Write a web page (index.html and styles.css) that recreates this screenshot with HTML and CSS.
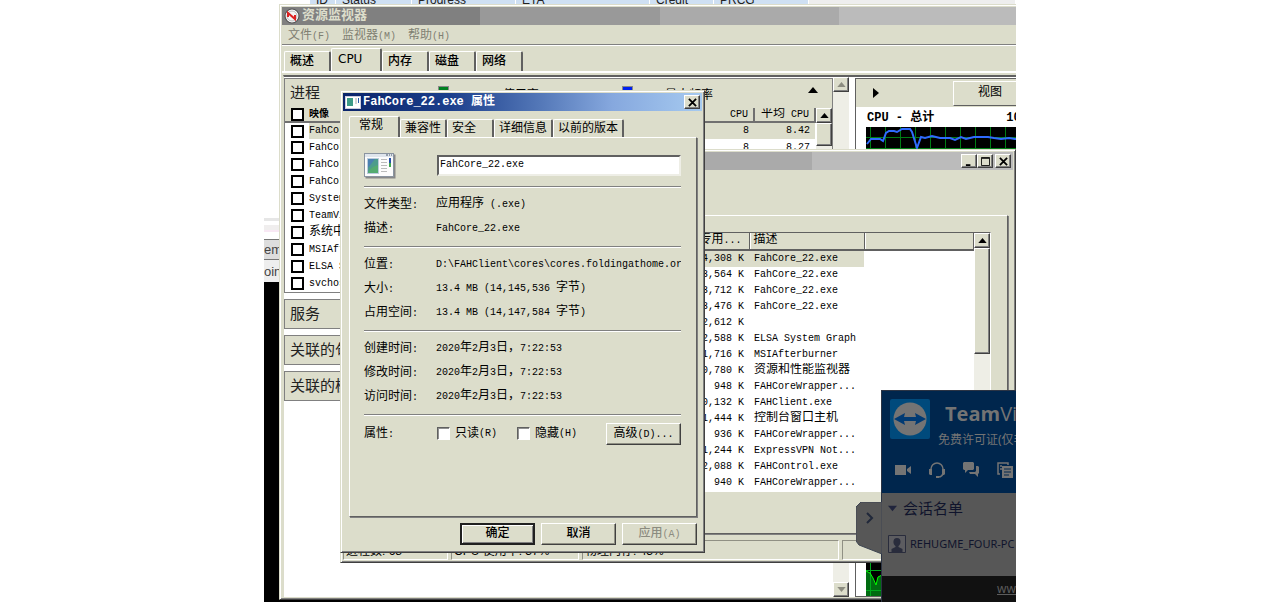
FILE: index.html
```html
<!DOCTYPE html>
<html lang="zh-CN">
<head>
<meta charset="utf-8">
<title>资源监视器</title>
<link rel="stylesheet" href="styles.css">
</head>
<body>
<main class="desktop">

  <section class="browser">
    <div class="queue-head"><span class="q-id">ID</span><span class="q-status">Status</span><span class="q-progress">Progress</span><span class="q-eta">ETA</span><span class="q-credit">Credit</span><span class="q-prcg">PRCG</span><span class="q-rest"></span></div>
    <div class="browser-blank"></div>
    <div class="browser-band"></div>
    <div class="browser-row">em</div>
    <div class="browser-row browser-row-light">oin</div>
    <div class="browser-dark"></div>
  </section>

  <section class="window monitor">
    <header class="titlebar titlebar-idle">
      <svg class="app-icon" viewBox="0 0 16 16"><circle cx="8" cy="8" r="7" fill="#fff" stroke="#555" stroke-width="1.2"/><circle cx="8" cy="8" r="5" fill="#f4f4f4" stroke="#bbb"/><path d="M4 9V5l7 6V7" fill="none" stroke="#d22" stroke-width="2"/></svg>
      <h1 class="title">资源监视器</h1>
    </header>
    <nav class="menu"><span>文件<i>(F)</i></span><span>监视器<i>(M)</i></span><span>帮助<i>(H)</i></span></nav>
    <nav class="tabs monitor-tabs">
      <button class="tab">概述</button><button class="tab tab-on">CPU</button><button class="tab">内存</button><button class="tab">磁盘</button><button class="tab">网络</button>
    </nav>
    <div class="monitor-body">
      <div class="panels">
        <section class="panel">
          <header class="panel-head">
            <h2>进程</h2>
            <span class="legend legend-cpu"><b class="chip chip-green"></b>CPU 使用率</span>
            <span class="legend"><b class="chip chip-blue"></b>最大频率</span>
            <svg class="arrow" viewBox="0 0 10 6"><path d="M0 6L5 0l5 6z"/></svg>
          </header>
          <div class="process-list">
            <table class="processes">
              <thead><tr><th class="c-check"><input type="checkbox" aria-label="全选"></th><th><b>映像</b></th><th class="c-cpu">CPU</th><th class="c-avg"><em>平均</em> CPU</th></tr></thead>
              <tbody>
                <tr class="picked"><td class="c-check"><input type="checkbox" aria-label="FahCore 1"></td><td>FahCore_22.exe</td><td>8</td><td>8.42</td></tr>
                <tr><td class="c-check"><input type="checkbox" aria-label="FahCore 2"></td><td>FahCore_22.exe</td><td>8</td><td>8.27</td></tr>
                <tr><td class="c-check"><input type="checkbox" aria-label="FahCore 3"></td><td>FahCore_22.exe</td><td></td><td></td></tr>
                <tr><td class="c-check"><input type="checkbox" aria-label="FahCore 4"></td><td>FahCore_22.exe</td><td></td><td></td></tr>
                <tr><td class="c-check"><input type="checkbox" aria-label="System"></td><td>System</td><td></td><td></td></tr>
                <tr><td class="c-check"><input type="checkbox" aria-label="TeamViewer"></td><td>TeamViewer.exe</td><td></td><td></td></tr>
                <tr><td class="c-check"><input type="checkbox" aria-label="系统中断"></td><td><em>系统中断</em></td><td></td><td></td></tr>
                <tr><td class="c-check"><input type="checkbox" aria-label="MSIAfterburner"></td><td>MSIAfterburner</td><td></td><td></td></tr>
                <tr><td class="c-check"><input type="checkbox" aria-label="ELSA"></td><td>ELSA System</td><td></td><td></td></tr>
                <tr><td class="c-check"><input type="checkbox" aria-label="svchost"></td><td>svchost.exe</td><td></td><td></td></tr>
              </tbody>
            </table>
            <div class="scroll"><button class="scroll-btn" aria-label="向上"><svg viewBox="0 0 10 6"><path d="M0 6L5 0l5 6z"/></svg></button><div class="thumb thumb-short"></div></div>
          </div>
        </section>
        <section class="panel panel-shut"><h2>服务</h2></section>
        <section class="panel panel-shut"><h2>关联的句柄</h2></section>
        <section class="panel panel-shut"><h2>关联的模块</h2></section>
      </div>
      <div class="scroll scroll-main"><button class="scroll-btn off" aria-label="向上"><svg viewBox="0 0 10 6"><path d="M0 6L5 0l5 6z"/></svg></button><div class="track"></div><button class="scroll-btn off" aria-label="向下"><svg viewBox="0 0 10 6"><path d="M0 0h10L5 6z"/></svg></button></div>
      <aside class="charts">
        <header class="charts-head"><svg class="arrow-right" viewBox="0 0 6 10"><path d="M0 0l6 5-6 5z"/></svg><button class="view-btn">视图</button></header>
        <div class="chart-title"><span>CPU - <em>总计</em></span><span>100%</span></div>
        <svg class="chart" viewBox="0 0 160 90" preserveAspectRatio="none"><rect width="160" height="90" fill="#000"/><path d="M4.500 0V90M19.500 0V90M34.500 0V90M49.500 0V90M64.500 0V90M79.500 0V90M94.500 0V90M109.500 0V90M124.500 0V90M139.500 0V90M0 10.500H160M0 21.500H160" stroke="#007c14"/><path d="M1 17l4-5h9l3 2 3-8 3-2h5l3 1 5-3h8l2 3 5 16 4-11 4 1 7-2 8 2h10l5 2 6-3 5 2 8-2h14l6 1 7 1 8-1 6 1h10" fill="none" stroke="#2f6bff" stroke-width="2"/></svg>
        <svg class="chart chart-low" viewBox="0 0 160 34" preserveAspectRatio="none"><rect width="160" height="34" fill="#000"/><path d="M0 9l4 2 3 5 3 7 2-8 4-2h144v21H0z" fill="#006b10"/><path d="M4.500 0V34M0 8.500H160M0 28.500H160" stroke="#00a81c"/><path d="M0 9l4 2 3 5 3 7 2-8 4-2" fill="none" stroke="#0f0"/></svg>
      </aside>
    </div>
  </section>

  <section class="window taskman">
    <header class="titlebar titlebar-idle">
      <div class="controls">
        <button aria-label="最小化"><svg viewBox="0 0 10 10"><path d="M1 8h5v2H1z"/></svg></button><button aria-label="最大化"><svg viewBox="0 0 10 10"><path d="M.5 .5h9v9h-9zM1 1.500h8" fill="none" stroke="#000"/></svg></button><button class="gap-left" aria-label="关闭"><svg viewBox="0 0 10 10"><path d="M1 1l8 8M9 1L1 9" stroke="#000" stroke-width="2"/></svg></button>
      </div>
    </header>
    <div class="taskman-page">
      <div class="task-list">
        <table class="tasks">
          <thead><tr><th class="t-mem"><em>专用</em>...</th><th class="t-desc"><em>描述</em></th><th></th></tr></thead>
          <tbody>
            <tr class="picked"><td>24,308 K</td><td>FahCore_22.exe</td><td></td></tr>
            <tr><td>23,564 K</td><td>FahCore_22.exe</td><td></td></tr>
            <tr><td>23,712 K</td><td>FahCore_22.exe</td><td></td></tr>
            <tr><td>23,476 K</td><td>FahCore_22.exe</td><td></td></tr>
            <tr><td>12,612 K</td><td></td><td></td></tr>
            <tr><td>12,588 K</td><td>ELSA System Graph</td><td></td></tr>
            <tr><td>11,716 K</td><td>MSIAfterburner</td><td></td></tr>
            <tr><td>10,780 K</td><td><em>资源和性能监视器</em></td><td></td></tr>
            <tr><td>948 K</td><td>FAHCoreWrapper...</td><td></td></tr>
            <tr><td>10,132 K</td><td>FAHClient.exe</td><td></td></tr>
            <tr><td>1,444 K</td><td><em>控制台窗口主机</em></td><td></td></tr>
            <tr><td>936 K</td><td>FAHCoreWrapper...</td><td></td></tr>
            <tr><td>11,244 K</td><td>ExpressVPN Not...</td><td></td></tr>
            <tr><td>12,088 K</td><td>FAHControl.exe</td><td></td></tr>
            <tr><td>940 K</td><td>FAHCoreWrapper...</td><td></td></tr>
          </tbody>
        </table>
        <div class="scroll"><button class="scroll-btn" aria-label="向上"><svg viewBox="0 0 10 6"><path d="M0 6L5 0l5 6z"/></svg></button><div class="thumb thumb-long"></div></div>
      </div>
    </div>
    <footer class="status"><span class="s-count">进程数: 68</span><span class="s-cpu">CPU 使用率: 37%</span><span class="s-mem">物理内存: 43%</span><span class="s-rest"></span></footer>
  </section>

  <section class="window props">
    <header class="titlebar titlebar-live">
      <svg class="exe-icon" viewBox="0 0 16 14"><rect x=".5" y="1.5" width="15" height="12" fill="#fff" stroke="#ccd"/><path d="M2 3h6v8H2z" fill="#3d9a86"/><path d="M10 4h2M10 6h2M10 8h2" stroke="#aaa"/><path d="M13 3h1v5h-1z" fill="#2458a8"/></svg>
      <h1 class="title">FahCore_22.exe <em>属性</em></h1>
      <div class="controls"><button aria-label="关闭"><svg viewBox="0 0 10 10"><path d="M1 1l8 8M9 1L1 9" stroke="#000" stroke-width="2"/></svg></button></div>
    </header>
    <nav class="tabs props-tabs">
      <button class="tab tab-on">常规</button><button class="tab">兼容性</button><button class="tab tab-wide">安全</button><button class="tab">详细信息</button><button class="tab">以前的版本</button>
    </nav>
    <div class="sheet">
      <div class="file-head">
        <svg class="file-icon" viewBox="0 0 32 26"><rect x="1.5" y="1.5" width="30" height="24" fill="#888"/><rect x=".5" y=".5" width="29" height="23" fill="#fcfcfc" stroke="#8a94a0"/><path d="M1 1h28v3H1z" fill="#dfe5ec"/><path d="M22 2h2M25 2h1M27 2h1" stroke="#456"/><path d="M3 5h12v16H3z" fill="#bcd"/><path d="M4 6h10v14H4z" fill="#4c9c8c"/><path d="M4 6h7L4 15z" fill="#4a80b0"/><path d="M4 20c2-5 6-7 10-8v8z" fill="#54ab70"/><path d="M17 6.500h6M17 9.500h6M17 12.500h6M17 15.500h6M17 18.500h6" stroke="#bbb"/><path d="M25 5h2v5h-2z" fill="#2450a8"/><path d="M25 10h2v4h-2z" fill="#3da64c"/></svg>
        <input class="file-name" type="text" aria-label="文件名" value="FahCore_22.exe">
      </div>
      <dl class="facts"><dt>文件类型<i>:</i></dt><dd><em>应用程序</em> (.exe)</dd><dt>描述<i>:</i></dt><dd>FahCore_22.exe</dd></dl>
      <dl class="facts"><dt>位置<i>:</i></dt><dd>D:\FAHClient\cores\cores.foldingathome.org</dd><dt>大小<i>:</i></dt><dd>13.4 MB (14,145,536 <em>字节</em>)</dd><dt>占用空间<i>:</i></dt><dd>13.4 MB (14,147,584 <em>字节</em>)</dd></dl>
      <dl class="facts"><dt>创建时间<i>:</i></dt><dd>2020<em>年</em>2<em>月</em>3<em>日，</em>7:22:53</dd><dt>修改时间<i>:</i></dt><dd>2020<em>年</em>2<em>月</em>3<em>日，</em>7:22:53</dd><dt>访问时间<i>:</i></dt><dd>2020<em>年</em>2<em>月</em>3<em>日，</em>7:22:53</dd></dl>
      <div class="attrs">
        <span class="attrs-label">属性<i>:</i></span>
        <label class="attr"><input type="checkbox">只读<i>(R)</i></label>
        <label class="attr"><input type="checkbox">隐藏<i>(H)</i></label>
        <button class="btn advanced">高级<i>(D)...</i></button>
      </div>
    </div>
    <footer class="actions"><button class="btn btn-default">确定</button><button class="btn">取消</button><button class="btn" disabled>应用<i>(A)</i></button></footer>
  </section>

  <section class="viewer">
    <button class="viewer-grip" aria-label="收起"><svg viewBox="0 0 26 52"><path d="M26 0H5L0 5v34l3 4 23 9z" fill="#575757" stroke="#3e4552"/><path d="M11 11l5 5-5 5" fill="none" stroke="#20283a" stroke-width="2"/></svg></button>
    <header class="viewer-head">
      <div class="brand">
        <svg class="brand-logo" viewBox="0 0 40 40"><rect width="40" height="40" rx="2" fill="#004a7c"/><circle cx="20" cy="20" r="16.500" fill="#747474"/><path d="M4 20l11-6-1 4h12l-1-4 11 6-11 6 1-4H14l1 4z" fill="#003a73"/></svg>
        <div class="brand-text"><div class="brand-name"><b>Team</b>Viewer</div><div class="brand-note">免费许可证(仅非商业用途)</div></div>
      </div>
      <div class="tools">
        <svg viewBox="0 0 18 18"><path d="M1 4h11v10H1zM13 8l4-3v8l-4-3z" fill="#747474"/></svg>
        <svg viewBox="0 0 18 18"><path d="M3 10V8a6 6 0 0 1 12 0v3c0 3-2 5-5 5" fill="none" stroke="#747474" stroke-width="1.500"/><path d="M1 8h3v6H2l-1-1zM14 8h3v5l-1 1h-2zM8 15h3v2H8z" fill="#747474"/></svg>
        <svg viewBox="0 0 18 18"><path d="M2 1h9l1 1v6l-1 1H6l-3 3V9H2L1 8V2zM14 5h2l1 1v6l-1 1v3l-3-3H8l-1-2h6l1-1z" fill="#747474"/></svg>
        <svg viewBox="0 0 18 18"><path d="M4 13H2V2h10v2M4 5h2M4 8h2" fill="none" stroke="#747474" stroke-width="1.500"/><path d="M6 5h11v12H6z" fill="#747474"/><path d="M8 8h7M8 11h7M8 14h5" stroke="#00264d"/></svg>
      </div>
    </header>
    <div class="viewer-body">
      <h2><svg viewBox="0 0 10 6"><path d="M0 0h10L5 6z"/></svg>会话名单</h2>
      <div class="peer"><svg viewBox="0 0 18 18"><path d="M.5.5h17v17H.5z" fill="#5c5c60" stroke="#292c3c"/><path d="M9 3c5 0 4 7 1.500 8v1l4 2v3h-11v-3l4-2v-1C5 10 4 3 9 3z" fill="#292c3c"/></svg>REHUGME_FOUR-PC</div>
    </div>
    <footer class="viewer-foot"><a href="#">www.teamviewer.com</a></footer>
  </section>

</main>
</body>
</html>
```
FILE: styles.css
```css
* { box-sizing: border-box; }
body { margin: 0; background: #fff; color: #000; font: 12px/16px "Liberation Mono", "Noto Sans CJK SC", monospace; }
h1, h2, dl, dd { margin: 0; font-weight: normal; }
i { font-style: normal; font-size: 10px; line-height: 0; }
em { font-style: normal; font-size: 12px; line-height: 0; }
button, input { font: inherit; color: inherit; border-radius: 0; margin: 0; padding: 0; }
svg { display: block; flex: none; }
table { border-collapse: collapse; table-layout: fixed; }
th, td { padding: 0; font-weight: normal; text-align: left; white-space: nowrap; overflow: hidden; }

.desktop { position: relative; height: 100vh; margin: 0 264px; overflow: hidden; }
.window { position: absolute; display: flex; flex-direction: column; background: #dcddcb; border: 1px solid; border-color: #dcddcb #404040 #404040 #dcddcb; box-shadow: inset 1px 1px #fff, inset -1px -1px #808080; padding: 2px; }

/* browser behind the windows */
.browser { height: 100%; display: flex; flex-direction: column; font-family: "Liberation Sans", sans-serif; color: #444; }
.queue-head { display: flex; align-items: flex-end; height: 4px; margin-left: 46px; overflow: hidden; background: #cfe0f3; color: #222; line-height: 8px; }
.queue-head span { flex: none; padding-left: 6px; border-right: 1px solid #fff; }
.q-id { width: 26px; }
.q-status { width: 76px; }
.q-progress { width: 104px; }
.q-eta { width: 134px; }
.q-credit { width: 64px; }
.q-prcg { width: 95px; }
.queue-head .q-rest { flex: 1; height: 4px; background: #eee; }
.browser-blank { height: 214px; }
.browser-band { height: 21px; border-top: 3px solid #e6e6e6; background: linear-gradient(#fff 4px, #f0eeee 4px 9px, #f8e8f4 9px 11px, #fff 11px); }
.browser-row { height: 20px; border-top: 1px solid #777; background: #ddd; font-size: 13px; line-height: 19px; }
.browser-row-light { height: 23px; background: #eee; line-height: 24px; }
.browser-dark { flex: 1; background: #000; }

/* title bars */
.titlebar { display: flex; align-items: center; height: 18px; flex: none; }
.titlebar-idle { background: linear-gradient(90deg, #808080 198px, #999 198px 378px, #aaa 378px 557px, #bbb 557px); }
.taskman .titlebar-idle { background: linear-gradient(90deg, #808080 25%, #999 25% 47%, #aaa 47% 70%, #bbb 70%); }
.titlebar-live { background: linear-gradient(90deg, #0a246a, #1c3f8c 30%, #5478b8 55%, #86a8de 75%, #a6caf0); color: #fff; }
.title { font-size: 13px; line-height: 20px; font-weight: bold; color: #dcddcb; }
.titlebar-live .title { font-size: 12px; line-height: 18px; color: #fff; }
.app-icon { width: 16px; height: 16px; margin: 0 2px; }
.exe-icon { width: 16px; height: 14px; margin: 0 2px; }
.controls { display: flex; margin-left: auto; padding-right: 2px; }
.controls button, .scroll-btn { display: flex; align-items: center; justify-content: center; width: 16px; height: 14px; background: #dcddcb; border: 1px solid; border-color: #fff #404040 #404040 #fff; box-shadow: inset -1px -1px #808080; }
.controls svg { width: 9px; height: 9px; }
.controls .gap-left { margin-left: 2px; }

/* tabs */
.tabs { display: flex; align-items: flex-end; }
.tab { height: 18px; padding: 0 5px; background: #dcddcb; border: solid; border-width: 1px 2px 0 1px; border-color: #fff #606060 #dcddcb #fff; border-radius: 2px 2px 0 0; line-height: 16px; white-space: nowrap; }
.tab-on { height: 21px; padding: 0 8px 3px 6px; }

/* scroll bars */
.scroll { display: flex; flex-direction: column; width: 16px; flex: none; background: #eeeee6; }
.scroll-btn { height: 15px; flex: none; }
.scroll-btn svg { width: 9px; height: 5px; }
.off svg { fill: #8c8c80; }
.thumb { background: #dcddcb; border: 1px solid; border-color: #fff #404040 #404040 #fff; box-shadow: inset -1px -1px #808080; }
.thumb-short { height: 23px; }
.thumb-long { height: 106px; }
.track { flex: 1; }

/* resource monitor */
.monitor { left: 15px; top: 4px; right: -23px; bottom: 2px; }
.menu { display: flex; gap: 12px; height: 20px; flex: none; padding: 0 6px; line-height: 22px; color: #808072; border-bottom: 1px solid #808080; box-shadow: 0 1px #fff; }
.monitor-tabs { height: 28px; flex: none; padding: 0 2px; border-bottom: 2px solid #fff; }
.monitor-tabs .tab { width: 47px; height: 20px; text-align: left; font-weight: 500; }
.monitor-tabs .tab-on { width: 51px; height: 23px; font-family: "DejaVu Sans", sans-serif; }
.monitor-body { flex: 1; min-height: 0; display: flex; margin: 2px 0 0 1px; background: #fff; border-top: 2px solid #606060; border-left: 1px solid #dcddcb; }
.panels { width: 549px; flex: none; display: flex; flex-direction: column; gap: 6px; padding-top: 1px; }
.panel { border: 1px solid #808080; font-size: 10px; }
.panel h2 { font: 15px/26px "Noto Sans CJK SC", sans-serif; color: #222; padding-left: 5px; }
.panel-shut { background: #dcddcb; height: 30px; }
.panel-head { display: flex; height: 29px; padding-right: 14px; background: #dcddcb; }
.panel-head h2 { width: 153px; }
.legend { display: flex; gap: 32px; width: 184px; padding-top: 7px; font-size: 12px; line-height: 20px; }
.legend-cpu { gap: 25px; }
.chip { width: 11px; height: 10px; border: 1px solid #888; }
.chip-green { background: #008020; }
.chip-blue { background: #0020f0; }
.arrow { width: 10px; height: 6px; margin: 8px 0 0 auto; }
.process-list { display: flex; height: 184px; overflow: hidden; }
.processes { flex: 1; width: 0; line-height: 16px; }
.processes th { height: 14px; line-height: 13px; background: #dcddcb; border-bottom: 2px solid #707070; }
.processes td { height: 17px; }
.processes th:nth-child(n+3), .processes td:nth-child(n+3) { text-align: right; padding-right: 5px; }
.processes th:nth-child(n+3) { border-right: 2px solid #707070; }
.c-check { width: 24px; }
.c-cpu { width: 70px; }
.c-avg { width: 61px; }
.processes input { appearance: none; display: block; width: 13px; height: 13px; margin-left: 6px; border: 2px solid #000; background: #fff; }
.picked td { background: #dcddcb; }
.processes .picked .c-check { background: #fff; }
.scroll-main { margin-right: 6px; }
.charts { flex: 1; min-width: 0; display: flex; flex-direction: column; margin-top: 1px; border: 1px solid #606060; }
.charts-head { display: flex; align-items: center; height: 28px; flex: none; background: #dcddcb; padding-left: 17px; }
.arrow-right { width: 6px; height: 10px; }
.view-btn { width: 74px; height: 25px; margin-left: 74px; background: #dcddcb; border: 1px solid; border-color: #fff #404040 #606060 #fff; }
.chart-title { display: flex; justify-content: space-between; padding: 2px 0 0 11px; font-weight: bold; font-size: 12px; height: 20px; line-height: 18px; }
.chart { width: 160px; height: 90px; margin-left: 10px; }
.chart-low { height: 34px; margin-top: auto; }

/* task manager */
.taskman { left: 76px; top: 149px; right: 0; height: 414px; }
.taskman-page { margin: 45px 5px 0 4px; height: 319px; flex: none; padding: 16px 16px 43px 14px; border: 1px solid; border-color: #fff #606060 #606060 #fff; box-shadow: 1px 1px #808080; }
.task-list { display: flex; height: 260px; overflow: hidden; background: #fff; border: 1px solid #606060; border-color: #606060 #fff #fff #606060; font-size: 10px; }
.tasks { flex: 1; width: 0; }
.tasks th { height: 16px; line-height: 16px; background: #dcddcb; border: solid #606060; border-width: 0 1px 2px 0; box-shadow: inset 1px 0 #fff; padding-left: 4px; }
.tasks td { height: 16px; line-height: 16px; padding-left: 5px; }
.tasks td:first-child { text-align: right; padding-right: 5px; }
.tasks .t-mem { width: 386px; text-align: right; padding-right: 7px; }
.tasks .t-desc { width: 115px; }
.picked td:last-child:empty { background: #fff; }
.status { display: flex; gap: 3px; margin-top: auto; height: 20px; line-height: 21px; }
.status span { border: 1px solid; border-color: #909084 #fff #fff #909084; padding-left: 2px; font-family: "Liberation Sans", "Noto Sans CJK SC", sans-serif; }
.s-count { width: 105px; }
.s-cpu { width: 128px; }
.s-mem { width: 257px; }
.s-rest { flex: 1; }

/* file properties dialog */
.props { left: 76px; top: 90px; width: 365px; height: 463px; }
.props-tabs { height: 26px; padding-left: 6px; flex: none; }
.props-tabs .tab { padding: 0 4px; }
.props-tabs .tab-on { width: 51px; padding: 0 12px 3px 6px; }
.props-tabs .tab-wide { width: 47px; text-align: left; }
.sheet { margin: 0 5px 0 6px; height: 380px; flex: none; padding: 15px 15px 0 14px; border: 1px solid; border-color: #fff #606060 #606060 #fff; box-shadow: 1px 1px #808080; }
.file-head { display: flex; height: 33px; gap: 41px; }
.file-icon { width: 32px; height: 26px; }
.file-name { flex: 1; min-width: 0; height: 21px; margin-top: 2px; padding: 0 1px 2px; background: #fff; border: 2px solid; border-color: #606060 #eeeee6 #eeeee6 #606060; font-size: 10px; }
.facts { display: grid; grid-template-columns: 72px 1fr; grid-auto-rows: 24px; line-height: 24px; padding: 6px 0 5px; border-top: 1px solid #808080; box-shadow: inset 0 1px #fff; }
.facts dd { font-size: 10px; white-space: nowrap; overflow: hidden; }
.attrs { display: flex; align-items: center; height: 38px; border-top: 1px solid #808080; box-shadow: inset 0 1px #fff; }
.attrs-label { width: 73px; }
.attr { display: flex; align-items: center; width: 80px; white-space: nowrap; }
.attr input { appearance: none; width: 13px; height: 13px; margin-right: 5px; background: #fff; border: 1px solid; border-color: #606060 #fff #fff #606060; box-shadow: inset 1px 1px #909090; }
.btn { width: 75px; height: 22px; background: #dcddcb; border: 1px solid; border-color: #fff #404040 #404040 #fff; box-shadow: inset -1px -1px #909084; line-height: 18px; font-weight: 500; }
.btn:disabled { color: #8c8c80; }
.advanced { margin-left: auto; font-weight: normal; }
.btn-default { border: 2px solid #202020; box-shadow: inset 1px 1px #fff, inset -1px -1px #808080; line-height: 16px; }
.actions { display: flex; justify-content: flex-end; gap: 6px; padding: 6px 5px 0; }

/* remote session panel */
.viewer { position: absolute; left: 617px; right: 0; top: 390px; bottom: 0; display: flex; flex-direction: column; border: solid #2c3444; border-width: 1px 0 0 1px; font-family: "Noto Sans", "Noto Sans CJK SC", sans-serif; color: #10142c; white-space: nowrap; }
.viewer-grip { position: absolute; left: -26px; top: 111px; border: 0; background: none; }
.viewer-grip svg { width: 26px; height: 52px; }
.viewer-head { height: 102px; flex: none; overflow: hidden; background: #00264d; color: #747474; }
.brand { display: flex; gap: 8px; padding: 8px 0 0 8px; }
.brand-logo { width: 40px; height: 40px; }
.brand-name { font: 20px/30px "Open Sans", sans-serif; padding-left: 7px; }
.brand-note { line-height: 22px; }
.tools { display: flex; gap: 16px; padding: 10px 0 0 12px; }
.tools svg { width: 18px; height: 18px; }
.viewer-body { flex: 1; overflow: hidden; background: #575757; padding: 4px 0 0 6px; }
.viewer-body h2 { display: flex; align-items: center; gap: 6px; font-size: 15px; line-height: 22px; }
.viewer-body h2 svg { width: 9px; height: 7px; fill: #20243c; }
.peer { display: flex; align-items: center; gap: 4px; padding-top: 16px; font-size: 11px; line-height: 18px; }
.peer svg { width: 18px; height: 18px; }
.viewer-foot { height: 26px; flex: none; overflow: hidden; background: #111; padding-left: 115px; line-height: 26px; }
.viewer-foot a { color: #5c5c5c; }
```
